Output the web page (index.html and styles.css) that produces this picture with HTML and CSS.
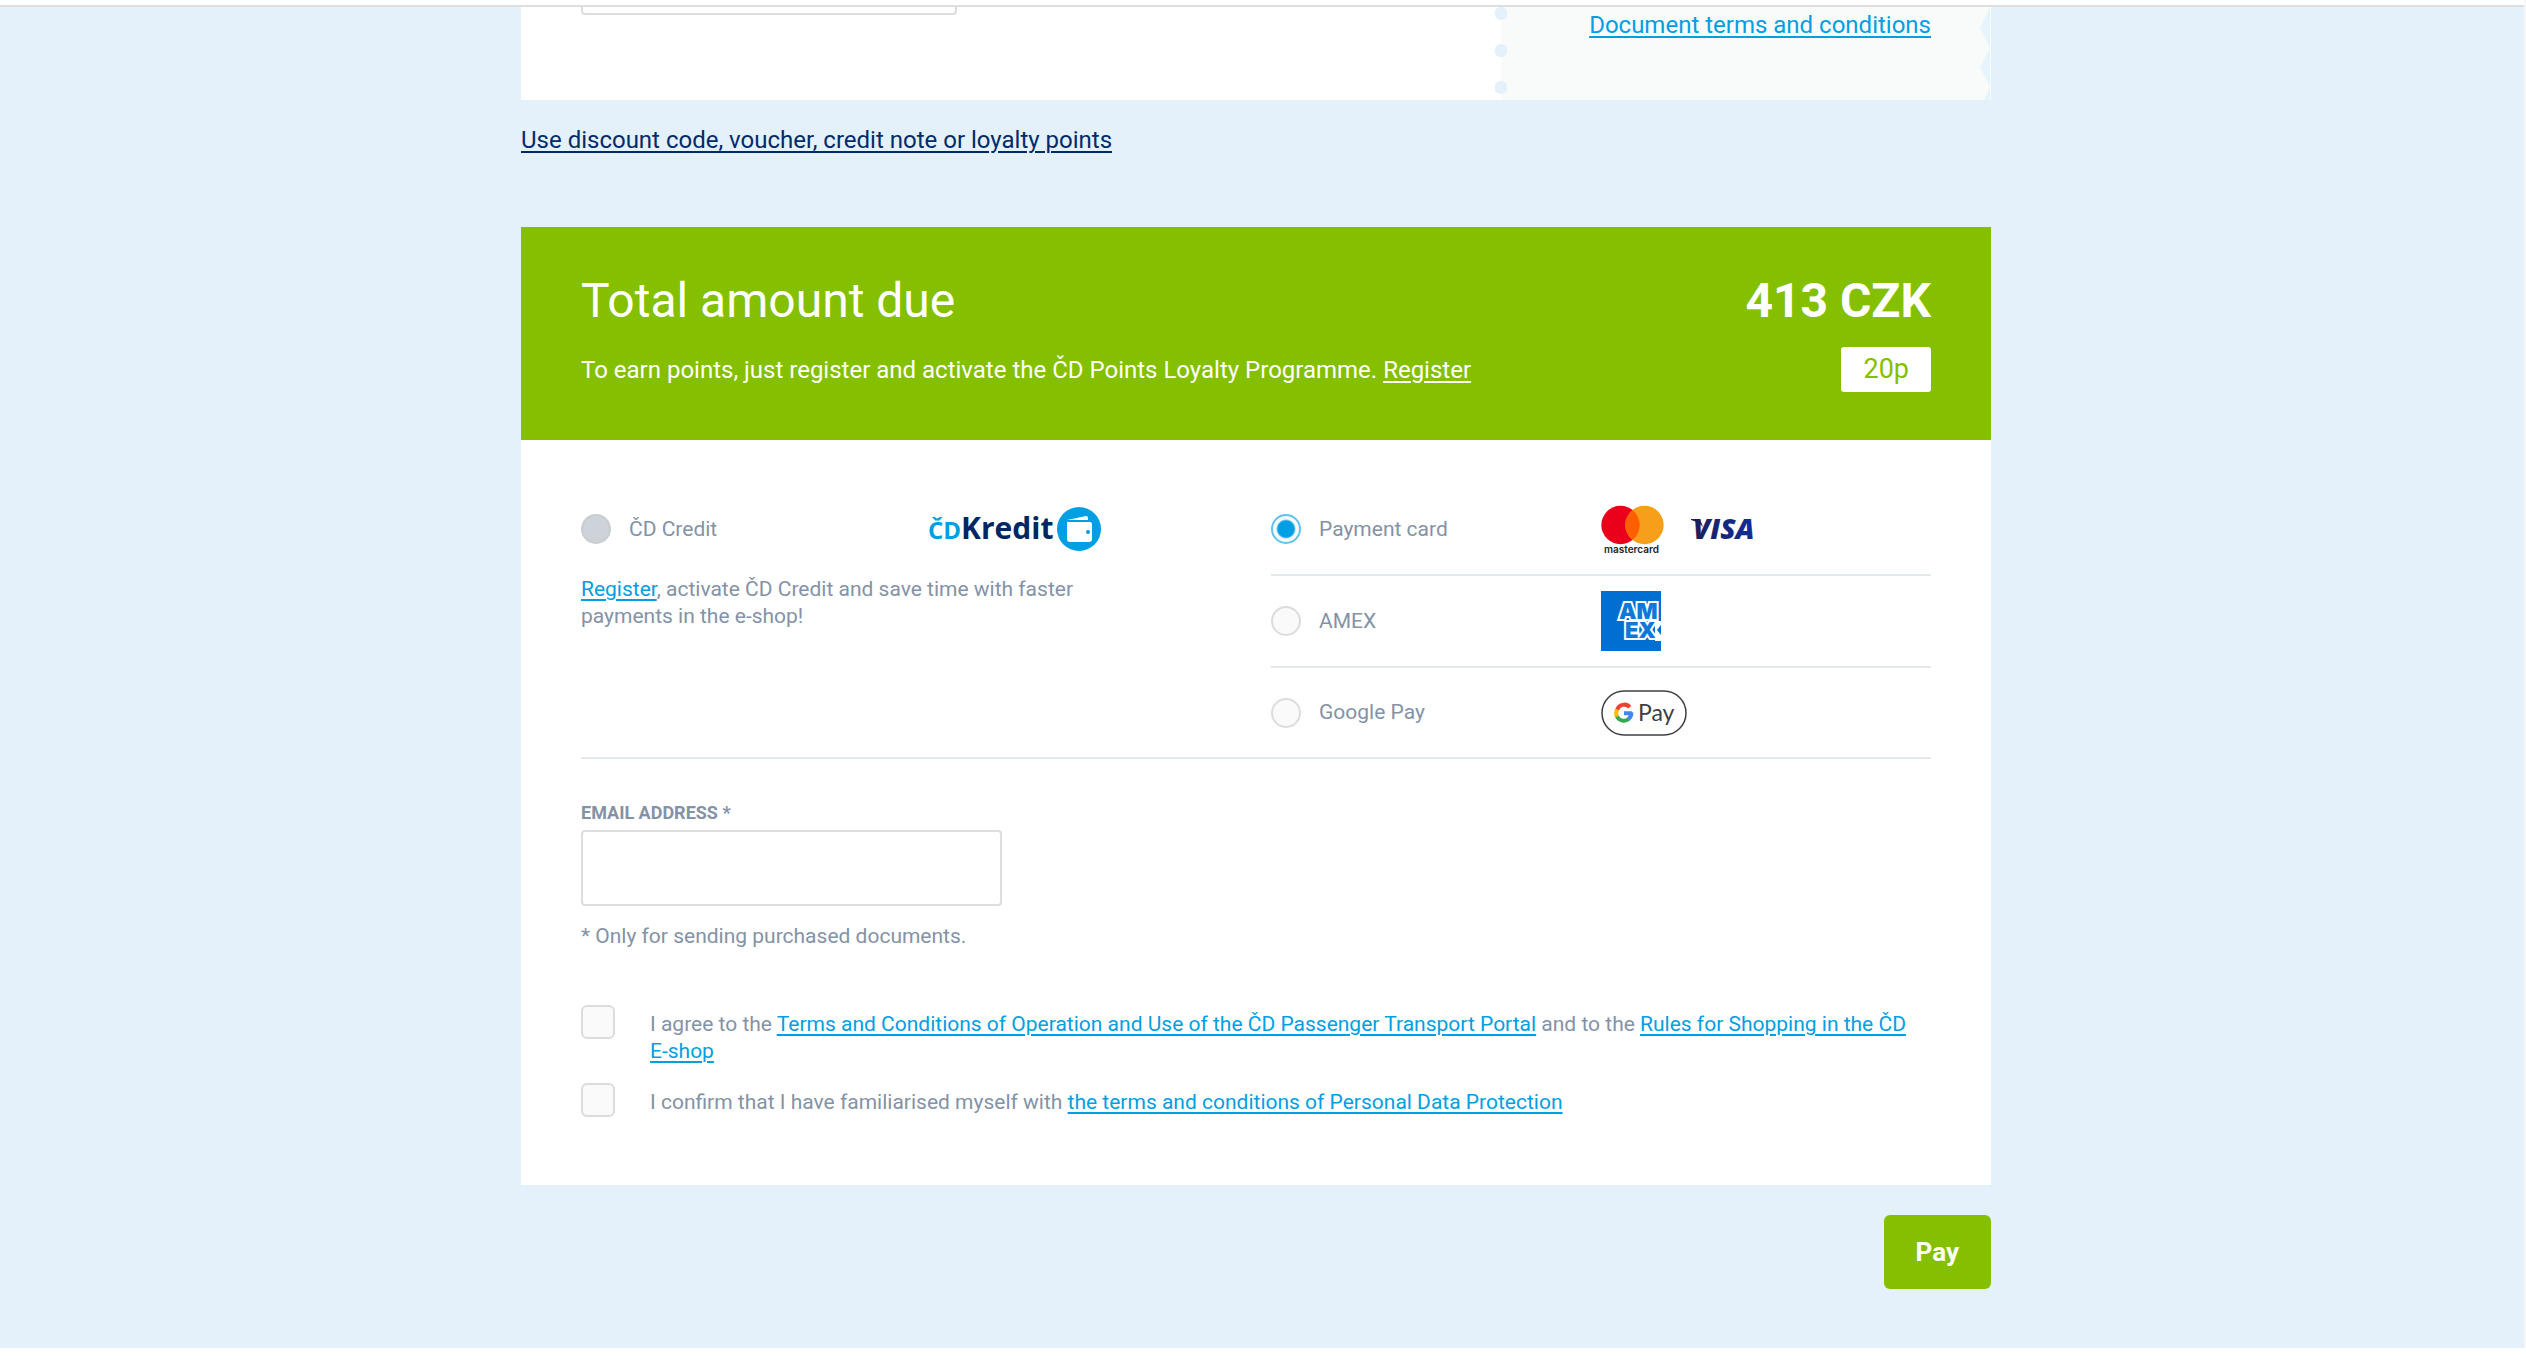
FILE: index.html
```html
<!DOCTYPE html>
<html lang="en">
<head>
<meta charset="utf-8">
<title>Payment</title>
<link rel="stylesheet" href="styles.css">
</head>
<body>
<header class="topbar"></header>
<main class="page">
  <div class="container">
    <section class="ticket" aria-label="Document">
      <div class="ticket-body"><input class="ticket-field" type="text" aria-label="Passenger name"></div>
      <div class="ticket-stub">
        <a class="stub-link" href="#">Document terms and conditions</a>
        <svg class="stub-edge" width="11" height="93" viewBox="0 0 11 93" aria-hidden="true"><path fill="#e6f4fc" d="M10 0L0 21L10 41L0 60L10 80L4 93H10Z"/></svg>
      </div>
    </section>
    <a class="discount-link" href="#">Use discount code, voucher, credit note or loyalty points</a>

    <form class="checkout">
      <section class="total">
        <div class="total-row">
          <h1 class="total-title">Total amount due</h1>
          <strong class="total-price">413 CZK</strong>
        </div>
        <div class="total-row">
          <p class="total-note">To earn points, just register and activate the ČD Points Loyalty Programme. <a href="#">Register</a></p>
          <span class="badge">20p</span>
        </div>
      </section>

      <div class="card">
        <section class="methods">
          <div class="credit">
            <div class="method">
              <label class="choice"><input class="radio" type="radio" name="method" disabled>ČD Credit</label>
              <svg width="180" height="48" viewBox="0 0 180 48" role="img" aria-label="ČD Kredit">
                <text class="logo-cd" x="1" y="34">ČD</text>
                <text class="logo-kredit" x="34" y="34">Kredit</text>
                <circle cx="152" cy="24" r="22" fill="#009fe3"/>
                <path fill="#fff" d="M142 17h21q2 0 2 2v15q0 3-3 3h-19q-3 0-3-3V17z"/>
                <path fill="#fff" d="M140 15l19-4q2 0 2 2v2z"/>
                <circle cx="161" cy="27" r="2" fill="#009fe3"/>
              </svg>
            </div>
            <p class="credit-note"><a href="#">Register</a>, activate ČD Credit and save time with faster payments in the e-shop!</p>
          </div>
          <div class="others">
            <div class="method">
              <label class="choice"><input class="radio" type="radio" name="method" checked>Payment card</label>
              <svg width="160" height="56" viewBox="0 0 160 56" role="img" aria-label="Mastercard, Visa">
                <defs><linearGradient id="visa"><stop offset="0" stop-color="#1c1f5c"/><stop offset="1" stop-color="#102d9c"/></linearGradient></defs>
                <circle cx="19.500" cy="24" r="19.200" fill="#eb001b"/>
                <circle cx="43.500" cy="24" r="19.200" fill="#f79e1b"/>
                <path fill="#ff5f00" d="M31.500 9a19.200 19.200 0 0 1 0 30a19.200 19.200 0 0 1 0-30z"/>
                <text class="logo-mc" x="3" y="52">mastercard</text>
                <text class="logo-visa" x="92" y="38">VISA</text>
                <path fill="#1c1f5c" d="M90 18h9l3 8q-4-5-12-7z"/>
              </svg>
            </div>
            <div class="method">
              <label class="choice"><input class="radio" type="radio" name="method">AMEX</label>
              <svg width="60" height="60" viewBox="0 0 60 60" role="img" aria-label="American Express">
                <path fill="#006fcf" d="M0 0h60v60H0z"/>
                <path fill="#fff" d="M54 30h6v20h-6z"/>
                <text class="logo-amex"><tspan x="18" y="28">AM</tspan><tspan x="24" y="47">EX</tspan></text>
                <path fill="#006fcf" d="M60 34v10l-4-5z"/>
              </svg>
            </div>
            <div class="method">
              <label class="choice"><input class="radio" type="radio" name="method">Google Pay</label>
              <svg width="86" height="46" viewBox="0 0 86 46" role="img" aria-label="Google Pay">
                <rect x="1" y="1" width="84" height="44" rx="22" fill="#fff" stroke="#3c4043" stroke-width="1.500"/>
                <g fill="none" stroke-width="4">
                  <path stroke="#ea4335" d="M28.800 17.200A7.500 7.500 0 0 0 16 20"/>
                  <path stroke="#fbbc04" d="M16.200 19.500A7.500 7.500 0 0 0 16.200 27"/>
                  <path stroke="#34a853" d="M16 26.500A7.500 7.500 0 0 0 28 28.600"/>
                  <path stroke="#4285f4" d="M23 23.200H31M30.300 22.500A7.500 7.500 0 0 1 27.500 29"/>
                </g>
                <text class="logo-gpay" x="37" y="31">Pay</text>
              </svg>
            </div>
          </div>
        </section>

        <section class="email">
          <label class="email-label" for="email">EMAIL ADDRESS *</label>
          <input class="email-input" id="email" type="email">
          <p class="email-hint">* Only for sending purchased documents.</p>
        </section>

        <section class="consents">
          <div class="consent">
            <input class="checkbox" type="checkbox" id="terms">
            <label class="consent-text" for="terms">I agree to the <a href="#">Terms and Conditions of Operation and Use of the ČD Passenger Transport Portal</a> and to the <a href="#">Rules for Shopping in the ČD <span class="nowrap">E-shop</span></a></label>
          </div>
          <div class="consent">
            <input class="checkbox" type="checkbox" id="privacy">
            <label class="consent-text" for="privacy">I confirm that I have familiarised myself with <a href="#">the terms and conditions of Personal Data Protection</a></label>
          </div>
        </section>
      </div>

      <div class="actions"><button class="pay" type="submit">Pay</button></div>
    </form>
  </div>
</main>
</body>
</html>
```

FILE: styles.css
```css
* { box-sizing: border-box; }

body {
  margin: 0;
  background: #fff;
  color: #8492a6;
  font: 21px/27px Roboto, "Liberation Sans", sans-serif;
  border-right: 2px solid #f7f7f7;
}

h1, p { margin: 0; font-weight: 400; }
a { color: #009fe3; text-underline-offset: 3px; text-decoration-thickness: 2px; }
svg { display: block; }
input { margin: 0; padding: 0; font: inherit; }
.nowrap { white-space: nowrap; }

.topbar { height: 7px; border-bottom: 2px solid #dcdedf; }
.page { background: #e4f1fb; padding: 0 12px 59px 0; }
.container { max-width: 1470px; margin: 0 auto; }

.ticket {
  display: grid;
  grid-template-columns: 2fr 1fr;
  height: 93px;
  overflow: hidden;
  background: #fff;
}
.ticket-body { padding-left: 60px; }
.ticket-field {
  display: block;
  width: 376px;
  height: 76px;
  margin-top: -68px;
  border: 2px solid #ddd;
  border-radius: 4px;
}
.ticket-stub {
  position: relative;
  padding-right: 60px;
  text-align: right;
  background: #f9fbfa;
}
.ticket-stub::before {
  content: "";
  position: absolute;
  top: -12px;
  bottom: 0;
  left: -6px;
  width: 12px;
  background: radial-gradient(circle, #e4f1fb 6px, transparent 7px) 0 0 / 12px 37px;
}
.stub-edge { position: absolute; top: 0; right: 0; }
.stub-link, .discount-link { font-size: 24px; line-height: 36px; }
.discount-link {
  display: inline-block;
  margin: 22px 0 69px;
  color: #002b69;
}

.total { padding: 44px 60px 48px; background: #84bf00; color: #fff; }
.total-row { display: flex; justify-content: space-between; align-items: center; }
.total-row + .total-row { margin-top: 16px; }
.total-title, .total-price { font-size: 48px; line-height: 60px; }
.total-price { font-weight: 700; }
.total-note { font-size: 24px; line-height: 36px; }
.total-note a { color: inherit; }
.badge {
  padding: 0 22px;
  border-radius: 3px;
  background: #fff;
  color: #84bf00;
  font-size: 27px;
  line-height: 45px;
}

.card { padding: 44px 60px 68px; background: #fff; }
.methods {
  display: grid;
  grid-template-columns: 23fr 22fr;
  border-bottom: 2px solid #e4e9ed;
}
.method { display: flex; align-items: center; height: 92px; }
.method .choice { flex: 0 0 330px; }
.credit .method { height: 90px; }
.credit .choice { flex-basis: 346px; }
.credit-note { max-width: 520px; padding-top: 2px; }
.others .method { border-bottom: 2px solid #e4e9ed; }
.others .method:last-child { height: 89px; border-bottom: 0; }
.choice { display: flex; align-items: center; gap: 18px; }

.radio, .checkbox {
  appearance: none;
  flex: none;
  border: 2px solid #dadcdf;
  background: #fafafa;
}
.radio { width: 30px; height: 30px; border-radius: 50%; }
.radio:disabled { background: #ced3da; border-color: #c8ccd1; }
.radio:checked {
  border-color: #5fc3ed;
  background: radial-gradient(circle, #009fe3 8px, #fafafa 10px);
}

.logo-cd { font: 700 24px "Open Sans", sans-serif; fill: #009fe3; }
.logo-kredit { font: 700 30px "Open Sans", sans-serif; fill: #002664; }
.logo-mc { font: 600 10px Inter, sans-serif; fill: #231f20; }
.logo-visa { font: italic 800 28px "Open Sans", sans-serif; fill: url(#visa); }
.logo-amex {
  font: 900 22px Inter, sans-serif;
  fill: #0f78d8;
  stroke: #fff;
  stroke-width: 4px;
  stroke-linejoin: miter;
  paint-order: stroke;
}
.logo-gpay { font: 400 23px Lato, sans-serif; fill: #3c4043; }

.email { padding-top: 42px; }
.email-label { display: block; font-size: 18px; line-height: 24px; font-weight: 700; }
.email-input {
  display: block;
  width: 421px;
  max-width: 100%;
  height: 76px;
  margin: 5px 0 17px;
  padding: 0 20px;
  border: 2px solid #ddd;
  border-radius: 4px;
}

.consents { display: grid; gap: 18px; margin-top: 55px; }
.consent { display: flex; gap: 35px; align-items: flex-start; }
.checkbox { width: 34px; height: 34px; border-radius: 6px; }
.consent-text { padding-top: 6px; }

.actions { display: flex; justify-content: flex-end; padding-top: 30px; }
.pay {
  padding: 0 32px;
  border: 0;
  border-radius: 6px;
  background: #84bf00;
  color: #fff;
  font: 700 26px/74px Roboto, "Liberation Sans", sans-serif;
}
```
